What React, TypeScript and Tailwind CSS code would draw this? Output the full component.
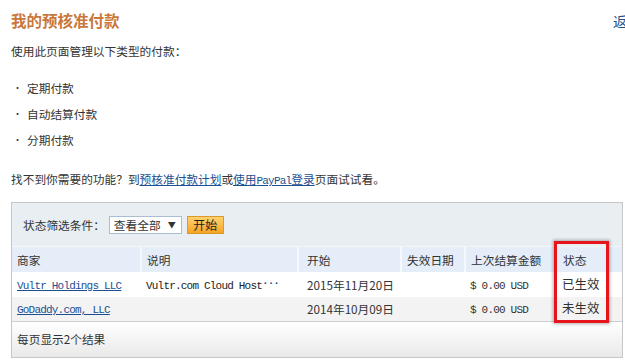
import React from 'react';

interface Row {
  merchant: string;
  note: string;
  start: string;
  end: string;
  amount: string;
  status: string;
}

const rows: Row[] = [
  { merchant: 'Vultr Holdings LLC', note: 'Vultr.com Cloud Host', start: '2015年11月20日', end: '', amount: '$ 0.00 USD', status: '已生效' },
  { merchant: 'GoDaddy.com, LLC', note: '', start: '2014年10月09日', end: '', amount: '$ 0.00 USD', status: '未生效' },
];

const cjk = { fontFamily: '"Microsoft YaHei", "Noto Sans CJK SC", "Noto Sans", sans-serif' };
const mono = { fontFamily: '"Liberation Mono", "Noto Sans CJK SC", monospace' };

const App: React.FC = () => {
  return (
    <div className="relative w-[625px] h-[360px] overflow-hidden bg-white text-[#333] text-[11.7px]" style={cjk}>
      <div className="pl-[11px]">
        <div className="flex justify-between w-[642px] pt-[10px]">
          <h1 className="text-[15.5px] leading-[20px] font-bold text-[#c9773a]">我的预核准付款</h1>
          <a className="text-[14px] leading-[20px] text-[#1d4f91] mt-[1px] w-[40px]">返回</a>
        </div>

        <p className="mt-[11px] leading-[18px]">使用此页面管理以下类型的付款：</p>

        <ul className="mt-[15px]">
          {['定期付款', '自动结算付款', '分期付款'].map(t => (
            <li key={t} className="flex items-center leading-[26px]">
              <span className="w-[16px] pl-[2px] text-[9px]">•</span>
              {t}
            </li>
          ))}
        </ul>

        <p className="mt-[17px] leading-[18px]">
          找不到你需要的功能？到
          <a className="text-[#1d4f91] underline">预核准付款计划</a>
          或
          <a className="text-[#1d4f91] underline">
            使用<span style={mono} className="text-[11px] tracking-[-0.8px]">PayPal</span>登录
          </a>
          页面试试看。
        </p>

        <div className="relative mt-[12px] w-[612px] border border-[#c7c7c7]">
          <div className="flex items-center h-[44px] bg-[#e9eef3] pl-[11px] border-b border-[#f4f7fa]">
            <span>状态筛选条件：</span>
            <div className="ml-[4px] flex items-center justify-between w-[73px] h-[18px] bg-white border border-[#a9bdd3] pl-[4px] pr-[5px]">
              <span>查看全部</span>
              <span className="text-[8px]">▼</span>
            </div>
            <button className="ml-[5px] h-[18px] w-[37px] text-[12px] leading-[16px] border border-[#d99a2b] bg-gradient-to-b from-[#ffd26a] to-[#f6a41e] text-[#222]">
              开始
            </button>
          </div>

          <table className="w-full table-fixed border-collapse">
            <colgroup>
              <col className="w-[129px]" />
              <col className="w-[157px]" />
              <col className="w-[103px]" />
              <col className="w-[64px]" />
              <col className="w-[91px]" />
              <col />
            </colgroup>
            <thead>
              <tr className="h-[25px] bg-[#e4edf8] text-left">
                <th className="font-normal pl-[5px] border-r-2 border-[#f5f8fc]">商家</th>
                <th className="font-normal pl-[5px] border-r-2 border-[#f5f8fc]">说明</th>
                <th className="font-normal pl-[8px] border-r-2 border-[#f5f8fc]">开始</th>
                <th className="font-normal pl-[5px] border-r-2 border-[#f5f8fc]">失效日期</th>
                <th className="font-normal pl-[5px] border-r-2 border-[#f5f8fc]">上次结算金额</th>
                <th className="font-normal pl-[6px]">状态</th>
              </tr>
            </thead>
            <tbody>
              {rows.map((r, i) => (
                <tr key={r.merchant} className={i % 2 === 0 ? 'h-[25px] bg-white' : 'h-[24px] bg-[#f3f3f3] border-b border-[#cfcfcf]'}>
                  <td className="pl-[5px]">
                    <a style={mono} className="text-[11px] tracking-[-0.8px] text-[#1d4f91] underline">{r.merchant}</a>
                  </td>
                  <td className="pl-[5px] whitespace-nowrap">
                    {r.note && (
                      <span style={mono} className="text-[11px] tracking-[-0.8px] text-[#222]">
                        {r.note}
                        <span className="relative -top-[3px] text-[#1d4f91] font-bold tracking-[-1px]">···</span>
                      </span>
                    )}
                  </td>
                  <td className="pl-[9px]">{r.start}</td>
                  <td>{r.end}</td>
                  <td className="pl-[5px]">
                    <span style={mono} className="text-[11px] tracking-[-0.8px]">{r.amount}</span>
                  </td>
                  <td className="pl-[6px] text-[12.5px]">{r.status}</td>
                </tr>
              ))}
            </tbody>
          </table>

          <div className="h-[35px] flex items-center pl-[5px] bg-gradient-to-b from-white to-[#e9e9e9]">
            每页显示2个结果
          </div>

          <div className="absolute left-[542px] top-[38px] w-[55px] h-[82px] border-[3px] border-[#e8141b] shadow-[0_0_3px_1px_rgba(0,0,0,0.3)]" />
        </div>
      </div>
    </div>
  );
};

export default App;
